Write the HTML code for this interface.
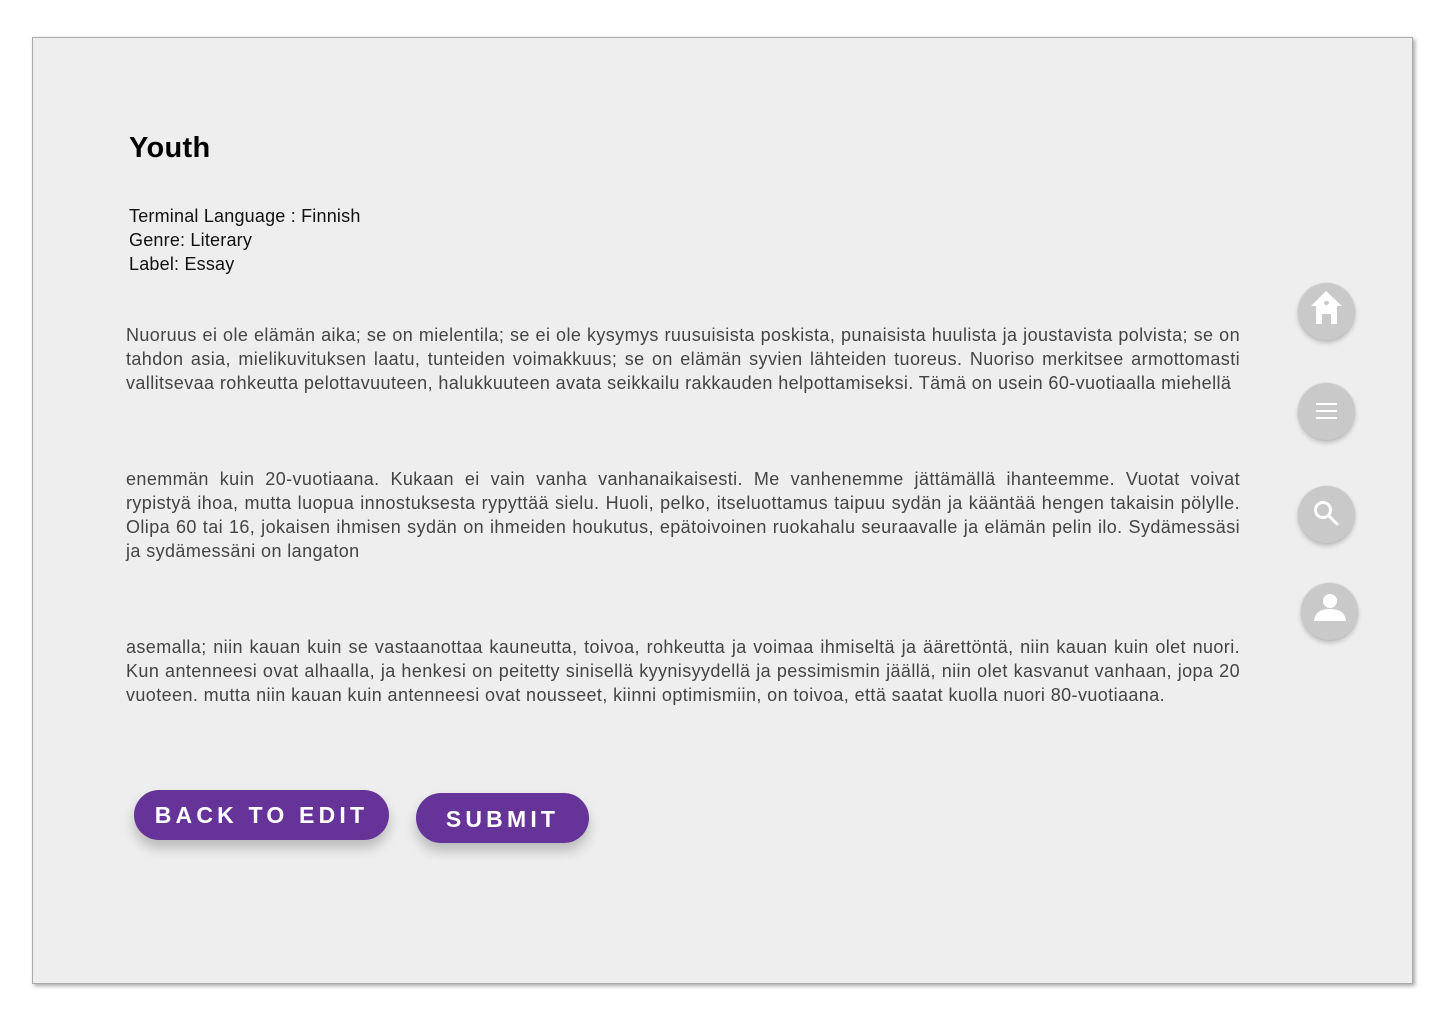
<!DOCTYPE html>
<html><head><meta charset="utf-8"><style>
*{margin:0;padding:0;box-sizing:border-box}
body{width:1440px;height:1024px;background:#fff;position:relative;overflow:hidden;font-family:"Liberation Sans",Arial,sans-serif}
.frame{position:absolute;left:32px;top:37px;width:1381px;height:947px;background:#eee;border:1px solid #aaa;box-shadow:2px 2px 4px rgba(0,0,0,.35)}
h1{position:absolute;left:129px;top:132px;font-size:29px;font-weight:bold;color:#000;letter-spacing:0.3px}
.meta{position:absolute;left:129px;top:204px;font-size:18px;line-height:24px;color:#111;letter-spacing:0.2px}
.p{position:absolute;left:126px;width:1114px;font-size:18px;line-height:24px;color:#444;letter-spacing:0.4px}
.p div{text-align:justify;text-align-last:justify;white-space:nowrap}
.p div.l{text-align-last:left}
.btn{position:absolute;background:#663399;color:#fff;border-radius:26px;font-weight:bold;font-size:23px;letter-spacing:4.2px;display:flex;align-items:center;justify-content:center;box-shadow:0 8px 12px rgba(0,0,0,.22)}
.c{position:absolute;width:57px;height:57px;border-radius:50%;background:#c9c9c9;box-shadow:0 3px 5px rgba(0,0,0,.2),0 0 0 1px rgba(0,0,0,.03)}
.c svg{position:absolute;left:0;top:0}
</style></head><body>
<div class="frame"></div>
<h1>Youth</h1>
<div class="meta">Terminal Language : Finnish<br>Genre: Literary<br>Label: Essay</div>
<div class="p" style="top:323px">
<div>Nuoruus ei ole elämän aika; se on mielentila; se ei ole kysymys ruusuisista poskista, punaisista huulista ja joustavista polvista; se on</div>
<div>tahdon asia, mielikuvituksen laatu, tunteiden voimakkuus; se on elämän syvien lähteiden tuoreus. Nuoriso merkitsee armottomasti</div>
<div class="l">vallitsevaa rohkeutta pelottavuuteen, halukkuuteen avata seikkailu rakkauden helpottamiseksi. Tämä on usein 60-vuotiaalla miehellä</div>
</div>
<div class="p" style="top:467px">
<div>enemmän kuin 20-vuotiaana. Kukaan ei vain vanha vanhanaikaisesti. Me vanhenemme jättämällä ihanteemme. Vuotat voivat</div>
<div>rypistyä ihoa, mutta luopua innostuksesta rypyttää sielu. Huoli, pelko, itseluottamus taipuu sydän ja kääntää hengen takaisin pölylle.</div>
<div>Olipa 60 tai 16, jokaisen ihmisen sydän on ihmeiden houkutus, epätoivoinen ruokahalu seuraavalle ja elämän pelin ilo. Sydämessäsi</div>
<div class="l">ja sydämessäni on langaton</div>
</div>
<div class="p" style="top:635px">
<div>asemalla; niin kauan kuin se vastaanottaa kauneutta, toivoa, rohkeutta ja voimaa ihmiseltä ja äärettöntä, niin kauan kuin olet nuori.</div>
<div>Kun antenneesi ovat alhaalla, ja henkesi on peitetty sinisellä kyynisyydellä ja pessimismin jäällä, niin olet kasvanut vanhaan, jopa 20</div>
<div class="l">vuoteen. mutta niin kauan kuin antenneesi ovat nousseet, kiinni optimismiin, on toivoa, että saatat kuolla nuori 80-vuotiaana.</div>
</div>
<div class="btn" style="left:134px;top:790px;width:255px;height:50px">BACK TO EDIT</div>
<div class="btn" style="left:416px;top:793px;width:173px;height:50px;padding-top:2px">SUBMIT</div>

<div class="c" style="left:1298px;top:283px"><svg width="57" height="57"><g fill="#fff"><path d="M28 8 L13 23 L18 23 L18 41 L24 41 L24 31 L33 31 L33 41 L39 41 L39 23 L44 23 Z"/></g><ellipse cx="28.5" cy="20" rx="2.5" ry="2" fill="#c9c9c9"/></svg></div>
<div class="c" style="left:1298px;top:383px"><svg width="57" height="57"><g fill="#fff"><rect x="18" y="20" width="21" height="2"/><rect x="18" y="27" width="21" height="2"/><rect x="18" y="34" width="21" height="2"/></g></svg></div>
<div class="c" style="left:1298px;top:486px"><svg width="57" height="57"><g fill="none" stroke="#fff" stroke-width="3" stroke-linecap="round"><circle cx="25" cy="24" r="7.5"/><line x1="30.5" y1="29.5" x2="39" y2="38"/></g></svg></div>
<div class="c" style="left:1301px;top:583px"><svg width="57" height="57"><g fill="#fff"><circle cx="29" cy="18" r="7"/><path d="M13 38 C14 29 20 26 29 26 C38 26 44 29 45 38 Z"/></g></svg></div>
</body></html>
